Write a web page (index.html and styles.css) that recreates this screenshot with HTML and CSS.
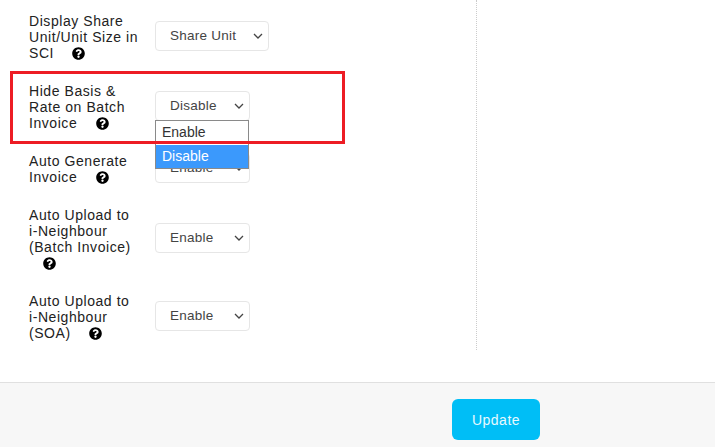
FILE: index.html
```html
<!DOCTYPE html>
<html lang="en">
<head>
    <meta charset="UTF-8">
    <meta name="viewport" content="width=device-width, initial-scale=1.0">
    <title>Invoice Settings</title>
    <link rel="stylesheet" href="styles.css">
</head>
<body>
    <svg class="icon-defs" width="0" height="0" aria-hidden="true">
        <symbol id="help" viewBox="0 0 512 512">
            <path d="M504 256c0 136.997-111.043 248-248 248S8 392.997 8 256C8 119.083 119.043 8 256 8s248 111.083 248 248zM262.655 90c-54.497 0-89.255 22.957-116.549 63.758-3.536 5.286-2.353 12.415 2.715 16.258l34.699 26.31c5.205 3.947 12.621 3.008 16.665-2.122 17.864-22.658 30.113-35.797 57.303-35.797 20.429 0 45.698 13.148 45.698 32.958 0 14.976-12.363 22.667-32.534 33.976C247.128 238.528 216 254.941 216 296v4c0 6.627 5.373 12 12 12h56c6.627 0 12-5.373 12-12v-1.333c0-28.462 83.186-29.647 83.186-106.667 0-58.002-60.165-102-116.531-102zM256 338c-25.365 0-46 20.635-46 46 0 25.364 20.635 46 46 46s46-20.636 46-46c0-25.365-20.635-46-46-46z"/>
        </symbol>
    </svg>

    <div class="content">
        <form class="settings" id="settingsForm">
            <div class="row">
                <label class="row-label">Display Share Unit/Unit Size in SCI <svg class="help"><use href="#help"/></svg></label>
                <select class="field field-wide">
                    <option>Share Unit</option>
                </select>
            </div>

            <div class="row">
                <label class="row-label">Hide Basis &amp; Rate on Batch Invoice <svg class="help"><use href="#help"/></svg></label>
                <div class="select-wrap">
                    <select class="field">
                        <option>Disable</option>
                        <option>Enable</option>
                    </select>
                    <ul class="select-list">
                        <li>Enable</li>
                        <li class="selected">Disable</li>
                    </ul>
                </div>
            </div>

            <div class="row">
                <label class="row-label">Auto Generate Invoice <svg class="help"><use href="#help"/></svg></label>
                <select class="field">
                    <option>Enable</option>
                    <option>Disable</option>
                </select>
            </div>

            <div class="row">
                <label class="row-label">Auto Upload to i-Neighbour (Batch Invoice) <svg class="help"><use href="#help"/></svg></label>
                <select class="field">
                    <option>Enable</option>
                    <option>Disable</option>
                </select>
            </div>

            <div class="row">
                <label class="row-label">Auto Upload to i-Neighbour (SOA) <svg class="help"><use href="#help"/></svg></label>
                <select class="field">
                    <option>Enable</option>
                    <option>Disable</option>
                </select>
            </div>
        </form>
        <div class="side-panel"></div>
    </div>

    <div class="footer">
        <button type="submit" form="settingsForm" class="update-button">Update</button>
    </div>

    <div class="highlight"></div>
</body>
</html>
```

FILE: styles.css
```css
* {
    margin: 0;
    padding: 0;
    box-sizing: border-box;
}

body {
    position: relative;
    height: 447px;
    overflow: hidden;
    background: #fff;
    color: #222;
    font-family: "Liberation Sans", Arial, sans-serif;
    font-size: 14px;
    letter-spacing: 0.56px;
}

.icon-defs {
    position: absolute;
}

.content {
    display: flex;
    height: 382px;
}

.settings {
    width: 477px;
    height: 350px;
    padding: 13px 0 0 29px;
    border-right: 1px dotted #ccc;
    display: flex;
    flex-direction: column;
    gap: 20px;
}

.row {
    display: flex;
    align-items: center;
    gap: 16px;
}

.row-label {
    width: 110px;
    line-height: 16px;
    padding-bottom: 2px;
}

.help {
    width: 13px;
    height: 13px;
    margin-left: 14px;
    vertical-align: -2px;
    fill: #000;
}

.field {
    width: 95px;
    height: 30px;
    margin-bottom: 4px;
    padding: 0 0 2px 14px;
    appearance: none;
    background: #fff url("data:image/svg+xml,%3Csvg xmlns='http://www.w3.org/2000/svg' width='10' height='6'%3E%3Cpath d='M1 1l4 4 4-4' fill='none' stroke='%23444' stroke-width='1.3'/%3E%3C/svg%3E") no-repeat right 5px center;
    border: 1px solid #e6e6e6;
    border-radius: 4px;
    color: #444;
    font-family: inherit;
    font-size: 13.5px;
    letter-spacing: 0.25px;
}

.field-wide {
    width: 114px;
}

.select-wrap {
    position: relative;
    height: 34px;
}

.select-list {
    position: absolute;
    top: 29px;
    left: 0;
    width: 94px;
    background: #fff;
    border: 1px solid #8a8a8a;
    list-style: none;
    font-size: 14px;
    letter-spacing: 0;
    color: #333;
    z-index: 1;
}

.select-list li {
    height: 24px;
    padding-left: 6px;
    line-height: 23px;
}

.select-list .selected {
    height: 23px;
    background: #3b99fc;
    color: #fff;
}

.footer {
    height: 65px;
    padding: 16px 0 0 452px;
    background: #f7f7f7;
    border-top: 1px solid #e0e0e0;
}

.update-button {
    width: 88px;
    height: 41px;
    background: #00bef6;
    border: none;
    border-radius: 6px;
    color: #e8f9ff;
    font-family: inherit;
    font-size: 14px;
    letter-spacing: 0.5px;
}

/* red box drawn over the form */
.highlight {
    position: absolute;
    top: 71px;
    left: 10px;
    width: 335px;
    height: 73px;
    border: 3px solid #ed1c24;
    z-index: 2;
    pointer-events: none;
}
```
